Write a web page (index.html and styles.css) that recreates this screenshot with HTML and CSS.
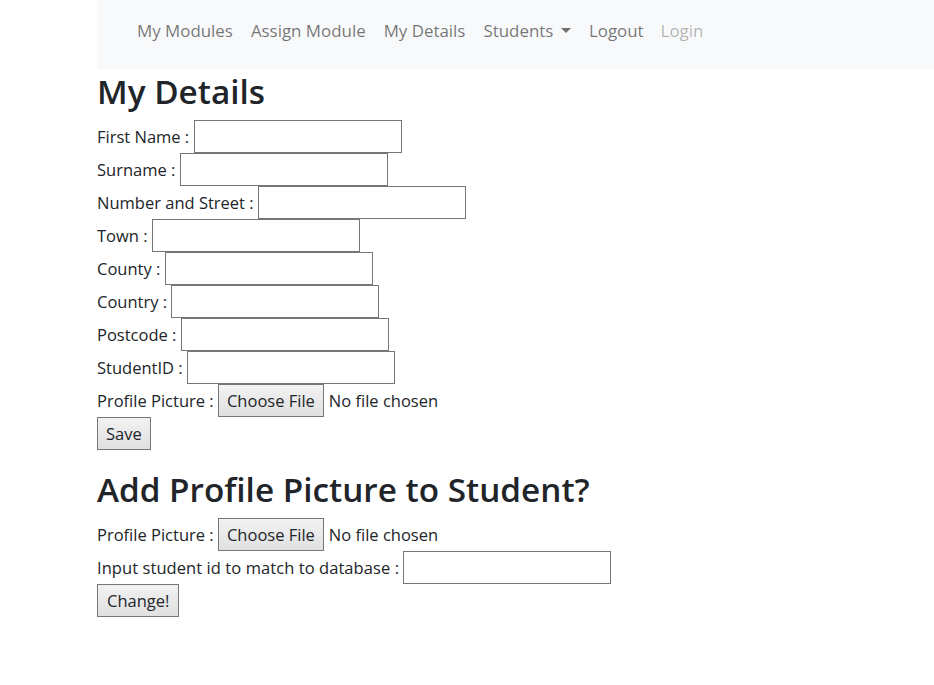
FILE: index.html
```html
<!DOCTYPE html>
<html lang="en">
<head>
<meta charset="utf-8">
<title>My Details</title>
<link rel="stylesheet" href="styles.css">
</head>
<body>
<div class="page">
  <nav class="navbar">
    <ul class="nav">
      <li><a class="nav-link" href="#">My Modules</a></li>
      <li><a class="nav-link" href="#">Assign Module</a></li>
      <li><a class="nav-link" href="#">My Details</a></li>
      <li><a class="nav-link dropdown-toggle" href="#">Students</a></li>
      <li><a class="nav-link" href="#">Logout</a></li>
      <li><a class="nav-link disabled" href="#">Login</a></li>
    </ul>
  </nav>
  <main class="content">
    <h1 class="heading">My Details</h1>
    <form class="form">
      <div class="field"><label class="label">First Name :</label><input class="text-input" type="text"></div>
      <div class="field"><label class="label">Surname :</label><input class="text-input" type="text"></div>
      <div class="field"><label class="label">Number and Street :</label><input class="text-input" type="text"></div>
      <div class="field"><label class="label">Town :</label><input class="text-input" type="text"></div>
      <div class="field"><label class="label">County :</label><input class="text-input" type="text"></div>
      <div class="field"><label class="label">Country :</label><input class="text-input" type="text"></div>
      <div class="field"><label class="label">Postcode :</label><input class="text-input" type="text"></div>
      <div class="field"><label class="label">StudentID :</label><input class="text-input" type="text"></div>
      <div class="field"><label class="label">Profile Picture :</label><button class="btn" type="button">Choose File</button><span class="file-name">No file chosen</span></div>
      <div class="field"><button class="btn" type="submit">Save</button></div>
    </form>
    <h1 class="heading heading-second">Add Profile Picture to Student?</h1>
    <form class="form">
      <div class="field"><label class="label">Profile Picture :</label><button class="btn" type="button">Choose File</button><span class="file-name">No file chosen</span></div>
      <div class="field"><label class="label label-long">Input student id to match to database :</label><input class="text-input" type="text"></div>
      <div class="field"><button class="btn btn-wide" type="submit">Change!</button></div>
    </form>
  </main>
</div>
</body>
</html>
```
FILE: styles.css
```css
body {
  margin: 0;
  font-family: "Open Sans", "Liberation Sans", sans-serif;
  font-size: 16.5px;
  line-height: 1.5;
  color: #212529;
  background: #fff;
}

.page {
  margin-left: 97px;
}

.navbar {
  background: #f8f9fa;
  height: 69px;
  box-sizing: border-box;
  padding: 18px 0 0 31px;
}

.nav {
  display: flex;
  list-style: none;
  margin: 0;
  padding: 0;
  font-size: 16.9px;
}

.nav-link {
  display: block;
  padding: 0 9px;
  color: rgba(0, 0, 0, 0.55);
  text-decoration: none;
}

.nav-link.disabled {
  color: rgba(0, 0, 0, 0.3);
  margin-left: -1px;
}

.dropdown-toggle::after {
  content: "";
  display: inline-block;
  margin-left: 0.45em;
  vertical-align: 0.255em;
  border-top: 0.3em solid;
  border-right: 0.3em solid transparent;
  border-left: 0.3em solid transparent;
}

.heading {
  font-size: 33.3px;
  font-weight: 600;
  line-height: 45px;
  margin: 0 0 6px;
  color: #212529;
}

.heading-second {
  margin-top: 17px;
}

.form {
  margin: 0;
}

.field {
  display: flex;
  align-items: center;
  height: 33px;
}

.label,
.file-name {
  padding-top: 2px;
}

.label {
  margin-right: 0.26em;
}

.label-long {
  letter-spacing: 0.07px;
}

.text-input {
  width: 208px;
  height: 33px;
  box-sizing: border-box;
  border: 1px solid #767676;
  padding: 1px 2px;
  margin: 0;
  font: inherit;
  background: #fff;
}

.btn {
  height: 33px;
  box-sizing: border-box;
  border: 1px solid #767676;
  border-radius: 0;
  background: linear-gradient(#f2f2f2, #e0e0e0);
  padding: 2px 8px 0;
  margin: 0;
  font: inherit;
  color: #212529;
}

.btn-wide {
  padding: 2px 9px 0;
}

.file-name {
  margin-left: 5px;
}
```
